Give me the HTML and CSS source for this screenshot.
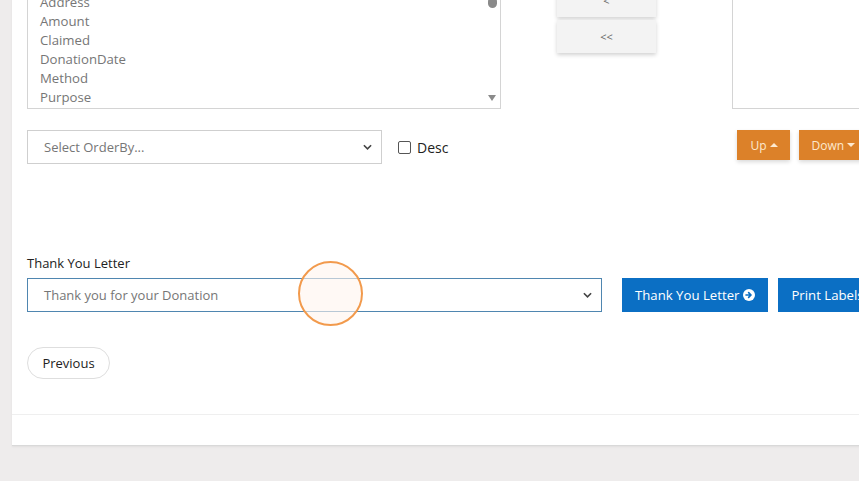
FILE: index.html
```html
<!DOCTYPE html>
<html>
<head>
<meta charset="utf-8">
<link rel="stylesheet" href="styles.css">
</head>
<body>
<div class="card">
  <div class="card-body">
    <div class="columns-row">
      <div class="listbox">
        <div class="item">Address</div>
        <div class="item">Amount</div>
        <div class="item">Claimed</div>
        <div class="item">DonationDate</div>
        <div class="item">Method</div>
        <div class="item">Purpose</div>
        <div class="scroll-thumb"></div>
        <div class="scroll-down"></div>
      </div>
      <div class="move-buttons">
        <button class="move-btn">&lt;</button>
        <button class="move-btn">&lt;&lt;</button>
      </div>
      <div class="listbox listbox-right"></div>
    </div>

    <div class="order-row">
      <div class="select select-order">
        <span>Select OrderBy...</span>
        <svg class="chev" viewBox="0 0 10 6" width="9" height="6"><path d="M1 1l4 4 4-4" fill="none" stroke="#444" stroke-width="1.8"/></svg>
      </div>
      <label class="desc"><span class="checkbox"></span>Desc</label>
      <div class="order-buttons">
        <button class="btn-orange">Up <span class="caret up"></span></button>
        <button class="btn-orange">Down <span class="caret"></span></button>
      </div>
    </div>

    <div class="letter-label">Thank You Letter</div>
    <div class="letter-row">
      <div class="select select-letter">
        <span>Thank you for your Donation</span>
        <svg class="chev" viewBox="0 0 10 6" width="9" height="6"><path d="M1 1l4 4 4-4" fill="none" stroke="#444" stroke-width="1.8"/></svg>
      </div>
      <button class="btn-blue">Thank You Letter
        <svg class="arrow-circle" viewBox="0 0 16 16" width="12" height="12"><circle cx="8" cy="8" r="8" fill="#fff"/><path d="M4 8h6M7.5 4.8L10.7 8 7.5 11.2" fill="none" stroke="#0b6fc4" stroke-width="2.2" stroke-linecap="round" stroke-linejoin="round"/></svg>
      </button>
      <button class="btn-blue">Print Labels</button>
    </div>

    <button class="btn-previous">Previous</button>
  </div>
  <div class="card-footer"></div>

  <div class="click-ring"></div>
</div>
</body>
</html>
```

FILE: styles.css
```css
html, body {
  margin: 0;
  padding: 0;
}

body {
  background: #eeecec;
  font-family: "Open Sans", "DejaVu Sans", sans-serif;
  overflow: hidden;
  width: 859px;
  height: 481px;
}

button {
  font-family: inherit;
  cursor: pointer;
}

.card {
  position: relative;
  margin-left: 12px;
  width: 1000px;
  background: #fff;
  border-bottom: 1px solid #d9d9d9;
  box-shadow: 0 1px 2px rgba(0, 0, 0, 0.06);
}

.card-body {
  padding: 0 0 35px 15px;
}

/* two list boxes with the move buttons between them */
.columns-row {
  display: flex;
  margin-top: -12px;
  height: 121px;
}

.listbox {
  position: relative;
  flex-shrink: 0;
  box-sizing: border-box;
  width: 474px;
  height: 121px;
  border: 1px solid #d4d4d4;
  padding: 4px 0 0 12px;
  background: #fff;
}

.item {
  font-size: 13.2px;
  line-height: 19px;
  color: #767676;
}

.scroll-thumb {
  position: absolute;
  right: 3px;
  top: 8px;
  width: 9px;
  height: 11px;
  border-radius: 5px;
  background: #8a8a8a;
}

.scroll-down {
  position: absolute;
  right: 4px;
  bottom: 7px;
  width: 0;
  height: 0;
  border-left: 4px solid transparent;
  border-right: 4px solid transparent;
  border-top: 6px solid #8a8a8a;
}

.move-buttons {
  flex-shrink: 0;
  display: flex;
  flex-direction: column;
  gap: 3px;
  margin-left: 56px;
  margin-top: -4px;
}

.move-btn {
  width: 99px;
  height: 33px;
  border: none;
  background: #f3f3f3;
  color: #666;
  font-size: 11px;
  box-shadow: 0 2px 4px rgba(0, 0, 0, 0.18);
}

.listbox-right {
  margin-left: 76px;
  width: 200px;
}

/* order by row */
.order-row {
  display: flex;
  align-items: flex-start;
  margin-top: 21px;
  height: 34px;
}

.select {
  flex-shrink: 0;
  box-sizing: border-box;
  display: flex;
  align-items: center;
  justify-content: space-between;
  height: 34px;
  border: 1px solid #cfcfcf;
  padding: 0 9px 0 16px;
  font-size: 13px;
  color: #767676;
  background: #fff;
}

.select-order {
  width: 355px;
}

.desc {
  display: flex;
  align-items: center;
  margin: 8px 0 0 16px;
  font-size: 14px;
  color: #222;
}

.checkbox {
  box-sizing: border-box;
  width: 13px;
  height: 13px;
  border: 1px solid #555;
  border-radius: 2px;
  margin-right: 6px;
}

.order-buttons {
  display: flex;
  gap: 9px;
  margin-left: 289px;
}

.btn-orange {
  height: 30px;
  padding: 0 12px 0 13px;
  border: none;
  background: #dc8129;
  color: #fde9cf;
  font-size: 12px;
  box-shadow: 0 2px 4px rgba(0, 0, 0, 0.15);
  display: flex;
  align-items: center;
  gap: 3px;
}

.caret {
  display: inline-block;
  width: 0;
  height: 0;
  border-left: 4px solid transparent;
  border-right: 4px solid transparent;
  border-top: 4px solid #fde9cf;
}

.caret.up {
  border-top: none;
  border-bottom: 4px solid #fde9cf;
}

/* thank you letter */
.letter-label {
  margin-top: 90px;
  font-size: 13px;
  line-height: 18px;
  color: #222;
}

.letter-row {
  display: flex;
  gap: 10px;
  margin-top: 6px;
}

.select-letter {
  width: 575px;
  border-color: #4f86b0;
  margin-right: 10px;
}

.btn-blue {
  flex-shrink: 0;
  height: 34px;
  padding: 0 13px;
  border: none;
  background: #0b6fc4;
  color: #fff;
  font-size: 13.2px;
  display: flex;
  align-items: center;
  gap: 4px;
  white-space: nowrap;
}

.btn-previous {
  margin-top: 35px;
  height: 32px;
  width: 83px;
  border: 1px solid #dedede;
  border-radius: 16px;
  background: #fff;
  color: #222;
  font-size: 13px;
  padding: 0;
}

.card-footer {
  height: 30px;
  border-top: 1px solid #efefef;
}

/* click indicator */
.click-ring {
  position: absolute;
  left: 286px;
  top: 273px;
  width: 61px;
  height: 61px;
  border: 2px solid #f29a4c;
  border-radius: 50%;
  background: rgba(255, 245, 238, 0.6);
}
```
